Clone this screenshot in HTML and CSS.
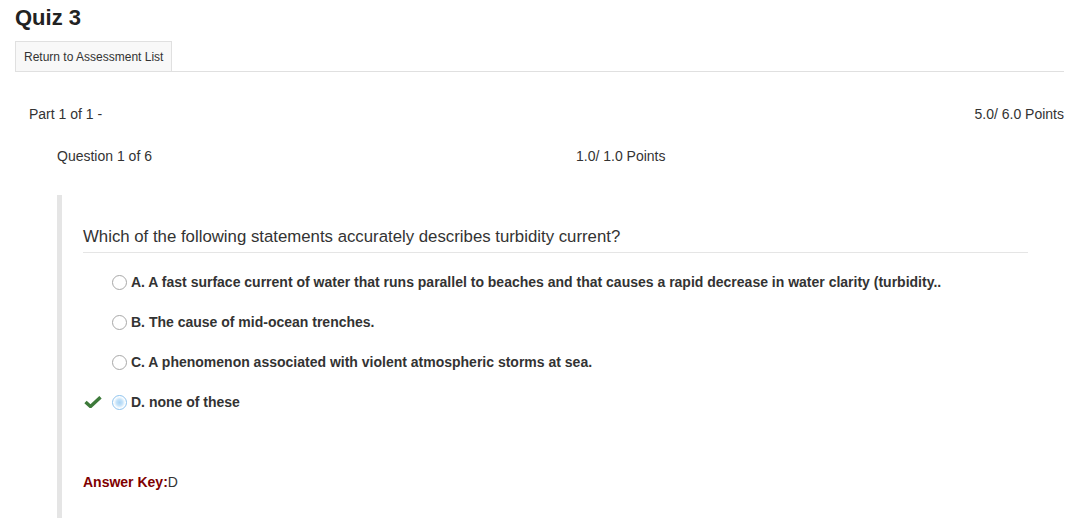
FILE: index.html
```html
<!DOCTYPE html>
<html>
<head>
<meta charset="utf-8">
<title>Quiz 3</title>
<link rel="stylesheet" href="styles.css">
</head>
<body>
<div class="page">
  <h1 class="title">Quiz 3</h1>
  <div class="tabs">
    <div class="tab">Return to Assessment List</div>
  </div>
  <div class="part-row">
    <span>Part 1 of 1 -</span>
    <span>5.0/ 6.0 Points</span>
  </div>
  <div class="question-row">
    <span class="q-num">Question 1 of 6</span>
    <span>1.0/ 1.0 Points</span>
  </div>
  <div class="question">
    <div class="question-text">Which of the following statements accurately describes turbidity current?</div>
    <ul class="options">
      <li class="option">
        <span class="mark"></span>
        <span class="radio"></span>
        <span class="label">A. A fast surface current of water that runs parallel to beaches and that causes a rapid decrease in water clarity (turbidity..</span>
      </li>
      <li class="option">
        <span class="mark"></span>
        <span class="radio"></span>
        <span class="label">B. The cause of mid-ocean trenches.</span>
      </li>
      <li class="option">
        <span class="mark"></span>
        <span class="radio"></span>
        <span class="label">C. A phenomenon associated with violent atmospheric storms at sea.</span>
      </li>
      <li class="option">
        <span class="mark">
          <svg width="18" height="12" viewBox="0 0 18 12"><path d="M1.5 6 L6.5 10.5 L16.5 1.2" fill="none" stroke="#3d7a3a" stroke-width="3.4" stroke-linejoin="miter"/></svg>
        </span>
        <span class="radio checked"></span>
        <span class="label">D. none of these</span>
      </li>
    </ul>
    <div class="answer-key"><span class="key-label">Answer Key:</span>D</div>
  </div>
</div>
</body>
</html>
```
FILE: styles.css
```css
* { box-sizing: border-box; }
body {
  margin: 0;
  font-family: "Liberation Sans", Arial, sans-serif;
  color: #333;
  background: #fff;
}
.page {
  padding: 5px 27px 0 15px;
}
.title {
  margin: 0;
  font-size: 22px;
  line-height: 26px;
  font-weight: bold;
  color: #222;
}
.tabs {
  margin-top: 10px;
  display: flex;
  border-bottom: 1px solid #e0e0e0;
}
.tab {
  height: 30px;
  line-height: 30px;
  padding: 0 8px;
  font-size: 12px;
  white-space: nowrap;
  background: #f8f8f8;
  border: 1px solid #e0e0e0;
  border-bottom: none;
  min-width: 156px;
}
.part-row {
  display: flex;
  justify-content: space-between;
  margin-top: 32px;
  padding-left: 14px;
  font-size: 14px;
  line-height: 20px;
}
.question-row {
  display: grid;
  grid-template-columns: 519px auto;
  margin-top: 22px;
  padding-left: 42px;
  font-size: 14px;
  line-height: 20px;
}
.question {
  margin: 29px 0 0 42px;
  border-left: 5px solid #e5e5e5;
  padding: 30px 36px 26px 21px;
}
.question-text {
  font-size: 16.8px;
  line-height: 23px;
  padding-bottom: 4px;
  border-bottom: 1px solid #e5e5e5;
}
.options {
  list-style: none;
  margin: 19px 0 0 0;
  padding: 0;
  display: flex;
  flex-direction: column;
  gap: 20px;
}
.option {
  display: flex;
  align-items: center;
  height: 20px;
  font-size: 14px;
  font-weight: bold;
}
.mark {
  width: 29px;
  display: flex;
  align-items: center;
  padding-left: 1px;
}
.mark svg { display: block; }
.radio {
  width: 15px;
  height: 15px;
  border-radius: 50%;
  border: 1px solid #a8a8a8;
  background: #fff;
  margin-right: 4px;
  flex-shrink: 0;
}
.radio.checked {
  border-color: #8ec3ee;
  background: radial-gradient(circle, #a9d4f5 0, #c4e2f9 3px, #eef7fd 5px, #fff 6px);
}
.label { white-space: nowrap; }
.answer-key {
  margin-top: 60px;
  font-size: 14px;
  line-height: 20px;
}
.key-label {
  font-weight: bold;
  color: #800000;
}
```
